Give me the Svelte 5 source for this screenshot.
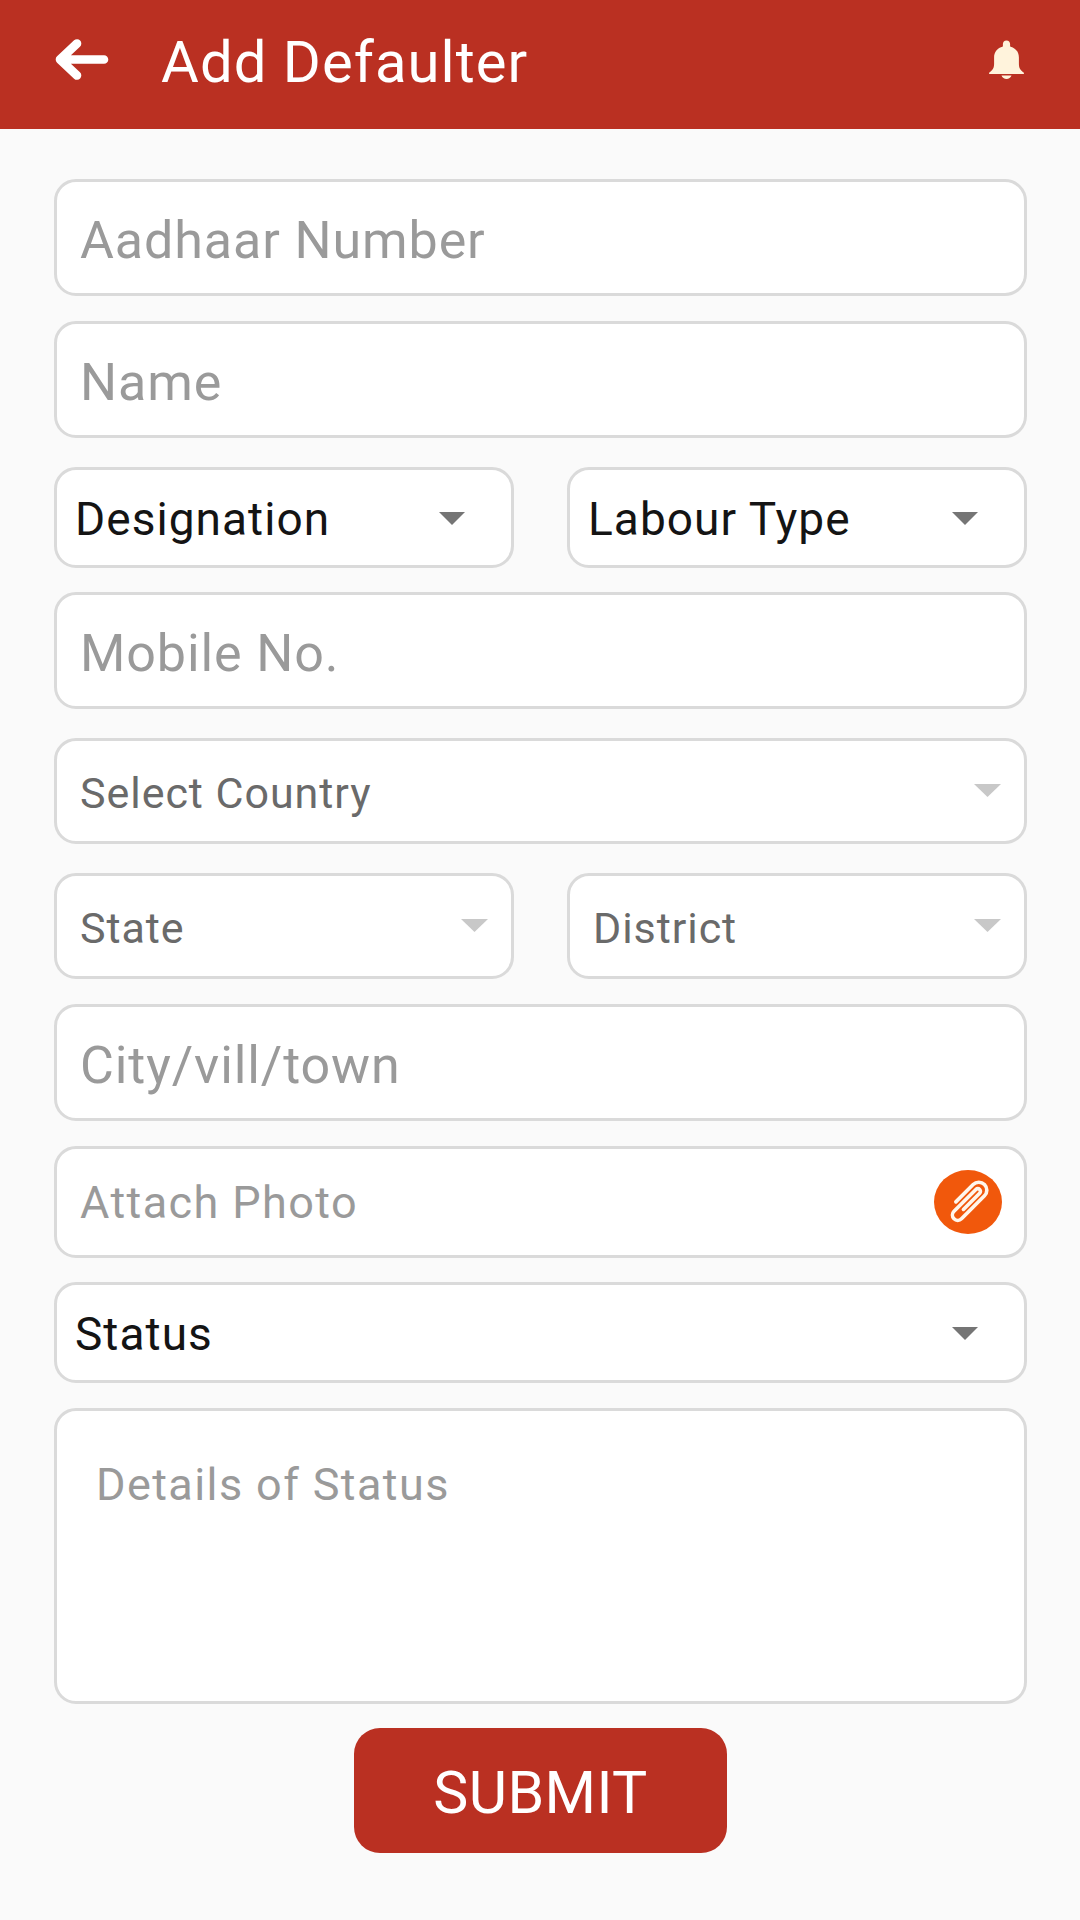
<!-- App.svelte : Add Defaulter -->
<script>
  const rows = [
    [{ label: "Aadhaar Number", kind: "input" }],
    [{ label: "Name", kind: "input" }],
    [
      { label: "Designation", kind: "spinner" },
      { label: "Labour Type", kind: "spinner" },
    ],
    [{ label: "Mobile No.", kind: "input" }],
    [{ label: "Select Country", kind: "dropdown" }],
    [
      { label: "State", kind: "dropdown" },
      { label: "District", kind: "dropdown" },
    ],
    [{ label: "City/vill/town", kind: "input" }],
    [{ label: "Attach Photo", kind: "attach" }],
    [{ label: "Status", kind: "spinner" }],
    [{ label: "Details of Status", kind: "details" }],
  ];
</script>

<div class="screen">
  <header>
    <svg class="back" width="54" height="42" viewBox="0 0 54 42">
      <path d="M49 20.5H5M22 4.500 5 20.500l17 16" />
    </svg>
    <h1>Add Defaulter</h1>
    <svg class="bell" width="36" height="40" viewBox="0 0 36 40">
      <path
        d="M17.500 .5c2.300 0 3.600 1.600 3.600 3.600v2.300c5.600 1.500 8.800 5.600 8.800 11v6.200c0 4.400 1.200 6.600 5 9.200v1.300H.1v-1.300c3.800-2.600 5-4.800 5-9.200v-6.200c0-5.400 3.200-9.500 8.800-11V4.100c0-2 1.300-3.600 3.600-3.600z"
      />
      <path d="M12.500 35.500h10c-.8 2.200-2.700 3.500-5 3.500s-4.200-1.300-5-3.500z" />
    </svg>
  </header>

  <main>
    {#each rows as row}
      <div class="row {row[0].kind}-row" class:status-row={row[0].label === "Status"}>
        {#each row as field}
          <div class="field {field.kind}">
            <span>{field.label}</span>
            {#if field.kind === "spinner"}
              <svg class="caret" width="26" height="13" viewBox="0 0 26 13">
                <path d="M0 0h26L13 13z" />
              </svg>
            {:else if field.kind === "dropdown"}
              <svg class="caret" width="27" height="13" viewBox="0 0 27 13">
                <path d="M0 0h27L13.500 13z" />
              </svg>
            {:else if field.kind === "attach"}
              <svg class="clip" width="68" height="64" viewBox="0 0 68 64">
                <ellipse cx="34" cy="32" rx="34" ry="32" />
                <path
                  transform="translate(33.500 31.500) rotate(45)"
                  d="M-8 8.500V-16a8 8 0 0 1 16 0V16.500a5.300 5.300 0 0 1-10.600 0V-14.500a2.650 2.650 0 0 1 5.300 0V8.500"
                />
              </svg>
            {/if}
          </div>
        {/each}
      </div>
    {/each}

    <button>SUBMIT</button>
  </main>
</div>

<style>
  :global(body) {
    margin: 0;
    background: #fafafa;
  }

  .screen {
    width: 1080px;
    height: 1920px;
    background: #fafafa;
    font-family: Roboto, "Liberation Sans", sans-serif;
    overflow: hidden;
  }

  header {
    display: flex;
    align-items: center;
    box-sizing: border-box;
    height: 129px;
    padding: 0 55px 9px;
    background: #ba3022;
  }

  h1 {
    flex: 1;
    margin: 3px 0 0 52px;
    font-size: 58px;
    font-weight: 400;
    letter-spacing: 1.05px;
    line-height: 70px;
    color: #fff;
  }

  .back path {
    fill: none;
    stroke: #fff;
    stroke-width: 8.6;
    stroke-linecap: round;
    stroke-linejoin: round;
  }

  .bell {
    fill: #fff3dc;
  }

  main {
    display: flex;
    flex-direction: column;
    gap: 24px;
    padding: 50px 53px 0 54px;
  }

  .row {
    display: flex;
    gap: 53px;
  }

  .field {
    flex: 1;
    display: flex;
    align-items: center;
    justify-content: space-between;
    box-sizing: border-box;
    border: 3px solid #dadada;
    border-radius: 22px;
    background: #fff;
    color: #9a9a9a;
    white-space: nowrap;
  }

  .input {
    height: 117px;
    padding: 6px 23px 0;
    font-size: 52px;
    letter-spacing: 0.9px;
  }

  .spinner {
    height: 101px;
    padding: 0 46px 0 18px;
    font-size: 46px;
    letter-spacing: 1.05px;
    color: #141414;
  }

  .spinner span,
  .dropdown span {
    margin-top: 3px;
  }

  .dropdown {
    height: 106px;
    padding: 0 23px;
    font-size: 43px;
    letter-spacing: 0.95px;
    color: #6a6a6a;
  }

  .attach {
    height: 112px;
    padding: 0 22px 0 23px;
    font-size: 45px;
    letter-spacing: 1.4px;
  }

  .details {
    align-items: flex-start;
    height: 296px;
    padding: 48px 39px;
    font-size: 45px;
    letter-spacing: 1.4px;
    line-height: 52px;
  }

  /* dropdown rows sit a little lower than the text inputs */
  .spinner-row,
  .dropdown-row {
    margin-top: 5px;
  }

  .input-row + .input-row,
  .dropdown-row + .input-row,
  .attach-row {
    margin-top: 1px;
  }

  .spinner-row.status-row {
    margin-top: 0;
  }

  .details-row {
    margin-top: 1px;
  }

  .caret {
    margin-top: 2px;
    fill: #757575;
  }

  .dropdown .caret {
    margin-top: -1px;
    fill: #c8c8c8;
  }

  .clip ellipse {
    fill: #f1580c;
  }

  .clip path {
    fill: none;
    stroke: #fff6ec;
    stroke-width: 3.6;
    stroke-linecap: round;
    stroke-linejoin: round;
  }

  button {
    align-self: center;
    width: 373px;
    height: 125px;
    padding: 4px 0 0;
    border: 0;
    border-radius: 26px;
    background: #ba3022;
    color: #fff;
    font-family: inherit;
    font-size: 59px;
    letter-spacing: 0.4px;
  }
</style>
